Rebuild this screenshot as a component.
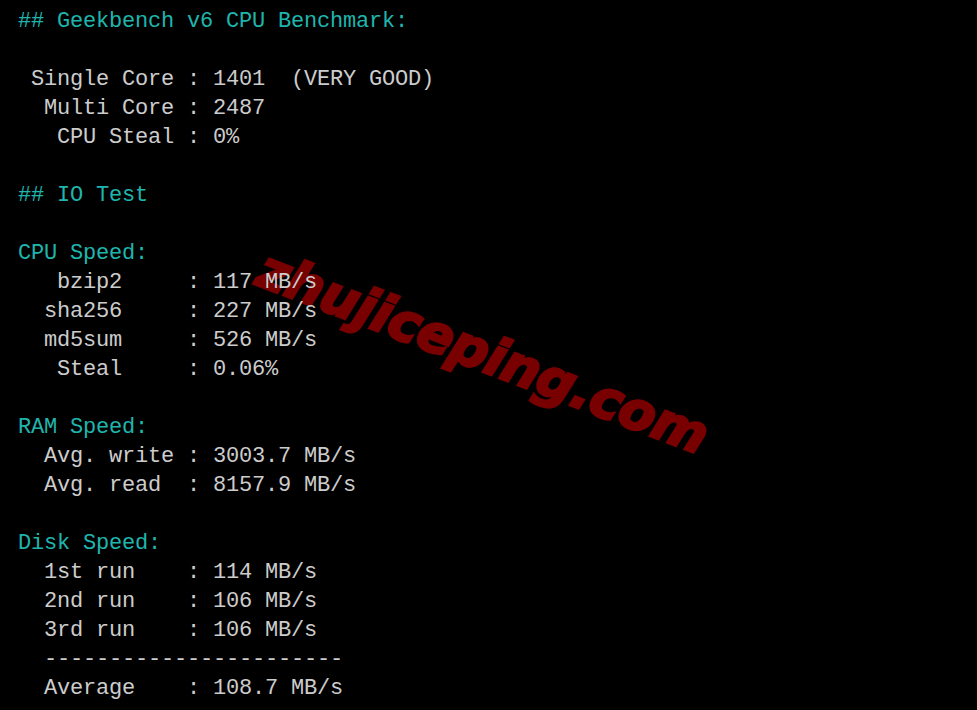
const lines: { text: string; head?: boolean }[] = [
  { text: '## Geekbench v6 CPU Benchmark:', head: true },
  { text: '' },
  { text: ' Single Core : 1401  (VERY GOOD)' },
  { text: '  Multi Core : 2487' },
  { text: '   CPU Steal : 0%' },
  { text: '' },
  { text: '## IO Test', head: true },
  { text: '' },
  { text: 'CPU Speed:', head: true },
  { text: '   bzip2     : 117 MB/s' },
  { text: '  sha256     : 227 MB/s' },
  { text: '  md5sum     : 526 MB/s' },
  { text: '   Steal     : 0.06%' },
  { text: '' },
  { text: 'RAM Speed:', head: true },
  { text: '  Avg. write : 3003.7 MB/s' },
  { text: '  Avg. read  : 8157.9 MB/s' },
  { text: '' },
  { text: 'Disk Speed:', head: true },
  { text: '  1st run    : 114 MB/s' },
  { text: '  2nd run    : 106 MB/s' },
  { text: '  3rd run    : 106 MB/s' },
  { text: '  -----------------------' },
  { text: '  Average    : 108.7 MB/s' },
];

export default function App() {
  return (
    <main className="relative h-[710px] w-[977px] overflow-hidden bg-[#000000]">
      {/* watermark */}
      <span className="absolute top-[352px] left-[483px] -translate-x-1/2 -translate-y-1/2 rotate-[21deg] whitespace-nowrap font-['DejaVu_Sans',sans-serif] text-[53px] leading-none font-bold tracking-[-0.5px] text-[#780000] italic [-webkit-text-stroke:2.5px_#780000]">
        zhujiceping.com
      </span>

      <div className="relative z-10 pt-[7px] pl-[18px] font-['Liberation_Mono',monospace] text-[22px] leading-[29px] tracking-[-0.2px] text-[#cccccc]">
        {lines.map((l, i) => (
          <div key={i} className={`h-[29px] whitespace-pre ${l.head ? 'text-[#1fb5ad]' : ''}`}>
            {l.text}
          </div>
        ))}
      </div>
    </main>
  );
}
